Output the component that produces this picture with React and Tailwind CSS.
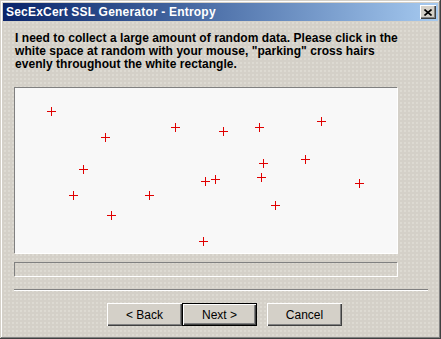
import React from 'react';

const crosses = [
  [51, 111], [105, 137], [175, 127], [223, 131], [259, 127], [321, 121],
  [83, 169], [263, 163], [305, 159], [73, 195], [149, 195], [205, 181],
  [215, 179], [261, 177], [359, 183], [111, 215], [275, 205], [203, 241],
];

// canvas inner top-left in page coords
const CANVAS_X = 15;
const CANVAS_Y = 88;

const Cross = ({ x, y }) => (
  <svg
    width="9"
    height="9"
    viewBox="0 0 9 9"
    className="absolute"
    shapeRendering="crispEdges"
    style={{ left: x - CANVAS_X - 4, top: y - CANVAS_Y - 4 }}
  >
    <path d="M0 4.5h9M4.5 0v9" stroke="#e00000" strokeWidth="1" />
  </svg>
);

const WinButton = ({ children, isDefault }) => (
  <button
    className={`w-[75px] h-[23px] bg-[#d4d0c8] text-[12px] text-black ${
      isDefault
        ? 'border border-black shadow-[inset_1px_1px_#fff,inset_-1px_-1px_#404040,inset_-2px_-2px_#808080]'
        : 'shadow-[inset_1px_1px_#fff,inset_-1px_-1px_#404040,inset_-2px_-2px_#808080]'
    }`}
  >
    {children}
  </button>
);

export default function App() {
  return (
    <div
      className="w-[441px] h-[339px] bg-[#d4d0c8] p-[3px] flex flex-col shadow-[inset_-1px_-1px_#404040,inset_1px_1px_#d4d0c8,inset_-2px_-2px_#808080,inset_2px_2px_#fff]"
      style={{ fontFamily: '"Liberation Sans", Arial, sans-serif' }}
    >
      {/* title bar */}
      <div className="h-[18px] flex items-center justify-between pl-[3px] pr-[2px] bg-gradient-to-r from-[#0a246a] to-[#a6caf0]">
        <span className="text-white font-bold text-[12px] tracking-[0.2px]">SecExCert SSL Generator - Entropy</span>
        <div className="w-[16px] h-[14px] bg-[#d4d0c8] flex items-center justify-center shadow-[inset_1px_1px_#fff,inset_-1px_-1px_#404040,inset_-2px_-2px_#808080]">
          <svg width="8" height="7" viewBox="0 0 8 7">
            <path d="M0.5 0.5l7 6M7.5 0.5l-7 6" stroke="#000" strokeWidth="1.6" />
          </svg>
        </div>
      </div>

      {/* body */}
      <div className="flex-1 bg-[radial-gradient(circle,#e6e4de_0.6px,transparent_0.8px)] bg-[length:4px_4px] flex flex-col">
        <p className="ml-[12px] mt-[11px] w-[386px] text-[12px] leading-[13px] font-bold text-black tracking-[0.05px]">
          I need to collect a large amount of random data. Please click in the white space at random with your mouse, "parking" cross hairs evenly throughout the white rectangle.
        </p>

        <div className="ml-[11px] mt-[16px] w-[383px] h-[166px] border-t border-l border-[#808080] shadow-[1px_1px_#fff] bg-[#f8f8f8] relative overflow-hidden">
          {crosses.map(([x, y], i) => (
            <Cross key={i} x={x} y={y} />
          ))}
        </div>

        <div className="ml-[11px] mt-[9px] w-[383px] h-[14px] border-t border-l border-[#808080] shadow-[1px_1px_#fff]" />

        <div className="ml-[11px] mt-[13px] w-[414px] h-[2px] border-t border-[#808080] border-b border-b-white" />

        <div className="flex pl-[104px] mt-[12px]">
          <WinButton>&lt; Back</WinButton>
          <WinButton isDefault>Next &gt;</WinButton>
          <div className="w-[10px]" />
          <WinButton>Cancel</WinButton>
        </div>
      </div>
    </div>
  );
}
